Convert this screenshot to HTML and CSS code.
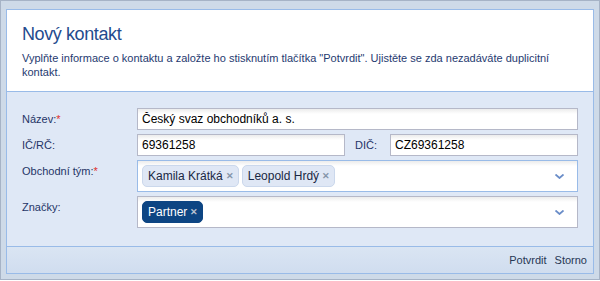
FILE: index.html
```html
<!DOCTYPE html>
<html lang="cs">
<head>
    <meta charset="UTF-8">
    <title>Nový kontakt</title>
    <link rel="stylesheet" href="styles.css">
</head>
<body>
    <div class="window">
        <div class="panel">
            <div class="header">
                <h1>Nový kontakt</h1>
                <p>Vyplňte informace o kontaktu a založte ho stisknutím tlačítka "Potvrdit". Ujistěte se zda nezadáváte duplicitní kontakt.</p>
            </div>
            <div class="form">
                <div class="row">
                    <label class="label">Název:<span class="req">*</span></label>
                    <input class="field" type="text" value="Český svaz obchodníků a. s.">
                </div>
                <div class="row">
                    <label class="label">IČ/RČ:</label>
                    <input class="field ic" type="text" value="69361258">
                    <label class="label-inline">DIČ:</label>
                    <input class="field" type="text" value="CZ69361258">
                </div>
                <div class="row">
                    <label class="label top">Obchodní tým:<span class="req">*</span></label>
                    <div class="multi active">
                        <span class="chip">Kamila Krátká <span class="x">&#x2715;</span></span>
                        <span class="chip">Leopold Hrdý <span class="x">&#x2715;</span></span>
                        <svg class="chevron" viewBox="0 0 9 5" width="9" height="5"><polyline points="0.5 0.5 4.5 4 8.5 0.5" fill="none" stroke="#6a8dc8" stroke-width="1.8"/></svg>
                    </div>
                </div>
                <div class="row">
                    <label class="label top">Značky:</label>
                    <div class="multi">
                        <span class="chip dark">Partner <span class="x">&#x2715;</span></span>
                        <svg class="chevron" viewBox="0 0 9 5" width="9" height="5"><polyline points="0.5 0.5 4.5 4 8.5 0.5" fill="none" stroke="#6a8dc8" stroke-width="1.8"/></svg>
                    </div>
                </div>
            </div>
            <div class="footer">
                <a class="btn">Potvrdit</a>
                <a class="btn">Storno</a>
            </div>
        </div>
    </div>
</body>
</html>
```

FILE: styles.css
```css
body {
    margin: 0;
    font-family: "Liberation Sans", Arial, sans-serif;
    background-color: #ffffff;
}
.window {
    width: 600px;
    height: 280px;
    box-sizing: border-box;
    border: 1px solid #a6b3c6;
    background-color: #cedae8;
    padding: 8px 5px 5px 5px;
}
.panel {
    height: 265px;
    box-sizing: border-box;
    border: 1px solid #99bbe8;
    display: flex;
    flex-direction: column;
}
.header {
    height: 82px;
    box-sizing: border-box;
    background-color: #ffffff;
    border-bottom: 1px solid #99bbe8;
    padding: 13px 15px 0 15px;
}
.header h1 {
    margin: 0;
    font-weight: normal;
    font-size: 18px;
    letter-spacing: -0.4px;
    line-height: 22px;
    color: #244b8e;
}
.header p {
    margin: 6px 0 0 0;
    font-size: 11px;
    line-height: 14px;
    color: #1f3a70;
}
.form {
    height: 155px;
    box-sizing: border-box;
    background-color: #dfe8f6;
    border-bottom: 1px solid #99bbe8;
    padding: 16px 15px 0 15px;
    display: flex;
    flex-direction: column;
    gap: 4px;
}
.row {
    display: flex;
    align-items: center;
}
.label {
    width: 115px;
    flex-shrink: 0;
    font-size: 11px;
    color: #1f3567;
}
.label.top {
    align-self: flex-start;
    padding-top: 5px;
}
.label-inline {
    width: 35px;
    margin-left: 10px;
    font-size: 11px;
    color: #1f3567;
}
.req {
    color: #e03030;
}
.field {
    flex: 1;
    min-width: 0;
    height: 22px;
    box-sizing: border-box;
    margin: 0;
    border: 1px solid #b5b8c8;
    padding: 0 4px;
    font-family: "Liberation Sans", Arial, sans-serif;
    font-size: 12px;
    color: #000000;
    background: linear-gradient(#ececec, #ffffff 5px);
    outline: none;
}
.field.ic {
    flex: 0 0 208px;
}
.multi {
    flex: 1;
    height: 32px;
    box-sizing: border-box;
    border: 1px solid #b5b8c8;
    background: linear-gradient(#ececec, #ffffff 5px);
    display: flex;
    align-items: center;
    gap: 3px;
    padding: 0 4px;
}
.multi.active {
    border-color: #99bbe8;
}
.chip {
    height: 22px;
    box-sizing: border-box;
    display: inline-flex;
    align-items: center;
    gap: 3px;
    padding: 0 4px 0 5px;
    border: 1px solid #cbd8ec;
    border-radius: 5px;
    background-color: #dfe7f5;
    font-size: 12px;
    color: #1a2744;
}
.chip .x {
    font-size: 9px;
    font-weight: bold;
    color: #8594aa;
}
.chip.dark {
    background-color: #0d4583;
    border-color: #0d4583;
    color: #ffffff;
}
.chip.dark .x {
    color: #b8c2d0;
}
.chevron {
    margin-left: auto;
    margin-right: 9px;
}
.footer {
    flex: 1;
    background: linear-gradient(#dae5f3, #d0ddef);
    display: flex;
    justify-content: flex-end;
    align-items: center;
    gap: 8px;
    padding-right: 6px;
}
.btn {
    font-size: 11px;
    color: #273754;
    cursor: pointer;
}
```
